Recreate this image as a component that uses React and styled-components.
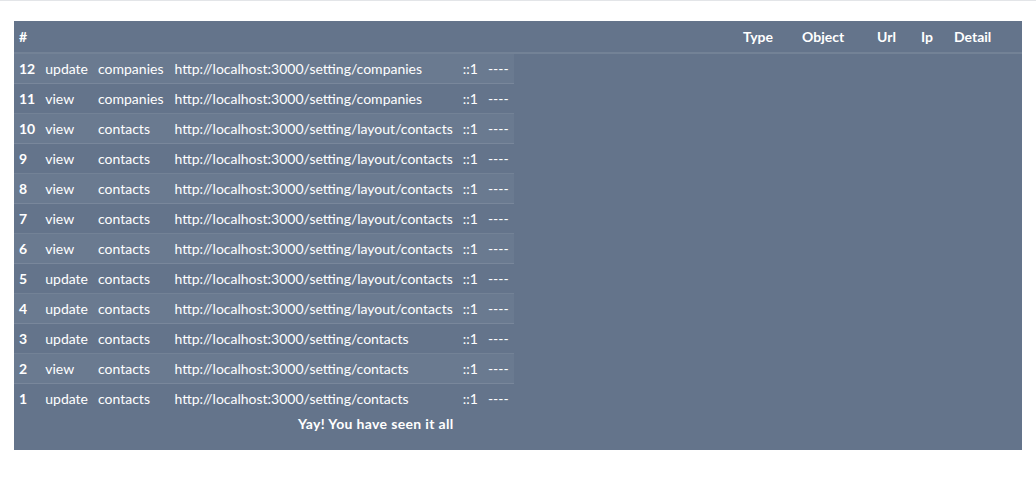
import React from "react";
import styled, { createGlobalStyle } from "styled-components";

const Global = createGlobalStyle`
  html, body { margin: 0; padding: 0; background: #ffffff; }
  body { font-family: "Lato", "Noto Sans", sans-serif; }
`;

const TopLine = styled.div`
  height: 1px;
  background: #e3e5e8;
`;

const Wrapper = styled.div`
  padding: 20px 14px 0 14px;
`;

const Panel = styled.div`
  background: #64748b;
  color: #ffffff;
  font-size: 14px;
  padding-bottom: 15px;
`;

const HeadRow = styled.div`
  display: flex;
  align-items: center;
  height: 33px;
  padding-bottom: 1px;
  box-sizing: border-box;
  border-bottom: 2px solid rgba(255, 255, 255, 0.1);
  font-weight: 700;
`;

const HeadHash = styled.div`
  flex: 1;
  padding-left: 5px;
`;

const HeadCell = styled.div`
  width: ${(p) => p.$w}px;
`;

const Table = styled.table`
  border-collapse: collapse;
  border-spacing: 0;
`;

const Row = styled.tr`
  background: ${(p) => (p.$odd ? "rgba(255,255,255,0.045)" : "transparent")};
  border-bottom: ${(p) => (p.$last ? "none" : "1px solid rgba(255,255,255,0.1)")};
`;

const Cell = styled.td`
  height: 29px;
  padding: 0 ${(p) => (p.$wide ? 6 : 5)}px 0 5px;
  white-space: nowrap;
  font-weight: ${(p) => (p.$bold ? 700 : 400)};
`;

const Footer = styled.div`
  line-height: 22px;
  font-weight: 700;
  letter-spacing: 0.35px;
  padding-left: 284px;
`;

const rows = [
  [12, "update", "companies", "http://localhost:3000/setting/companies"],
  [11, "view", "companies", "http://localhost:3000/setting/companies"],
  [10, "view", "contacts", "http://localhost:3000/setting/layout/contacts"],
  [9, "view", "contacts", "http://localhost:3000/setting/layout/contacts"],
  [8, "view", "contacts", "http://localhost:3000/setting/layout/contacts"],
  [7, "view", "contacts", "http://localhost:3000/setting/layout/contacts"],
  [6, "view", "contacts", "http://localhost:3000/setting/layout/contacts"],
  [5, "update", "contacts", "http://localhost:3000/setting/layout/contacts"],
  [4, "update", "contacts", "http://localhost:3000/setting/layout/contacts"],
  [3, "update", "contacts", "http://localhost:3000/setting/contacts"],
  [2, "view", "contacts", "http://localhost:3000/setting/contacts"],
  [1, "update", "contacts", "http://localhost:3000/setting/contacts"],
];

const heads = [
  ["Type", 59],
  ["Object", 75],
  ["Url", 44],
  ["Ip", 33],
  ["Detail", 68],
];

export default function App() {
  return (
    <>
      <Global />
      <TopLine />
      <Wrapper>
        <Panel>
          <HeadRow>
            <HeadHash>#</HeadHash>
            {heads.map(([t, w]) => (
              <HeadCell key={t} $w={w}>
                {t}
              </HeadCell>
            ))}
          </HeadRow>
          <Table>
            <tbody>
              {rows.map((r, i) => (
                <Row key={r[0]} $odd={i % 2 === 0} $last={i === rows.length - 1}>
                  <Cell $bold>{r[0]}</Cell>
                  <Cell>{r[1]}</Cell>
                  <Cell $wide>{r[2]}</Cell>
                  <Cell>{r[3]}</Cell>
                  <Cell>::1</Cell>
                  <Cell>----</Cell>
                </Row>
              ))}
            </tbody>
          </Table>
          <Footer>Yay! You have seen it all</Footer>
        </Panel>
      </Wrapper>
    </>
  );
}
